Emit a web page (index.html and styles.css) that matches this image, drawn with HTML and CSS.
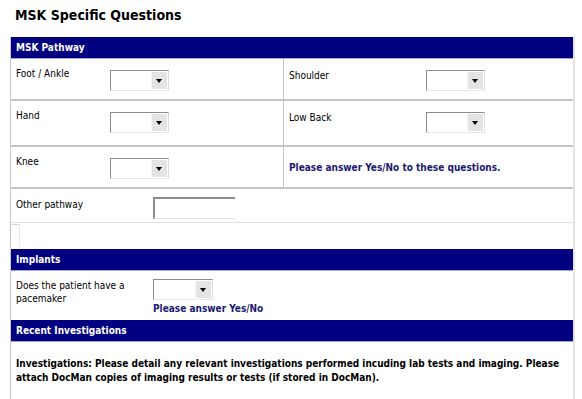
FILE: index.html
```html
<!DOCTYPE html>
<html lang="en">
<head>
    <meta charset="UTF-8">
    <title>MSK Specific Questions</title>
    <link rel="stylesheet" href="styles.css">
</head>
<body>
    <h1 class="page-title">MSK Specific Questions</h1>
    <div class="form">
        <div class="section-head">MSK Pathway</div>
        <div class="pair-row">
            <div class="cell">
                <span class="label">Foot / Ankle</span>
                <span class="select"><span class="arrow"></span></span>
            </div>
            <div class="cell right">
                <span class="label">Shoulder</span>
                <span class="select"><span class="arrow"></span></span>
            </div>
        </div>
        <div class="pair-row tall">
            <div class="cell">
                <span class="label">Hand</span>
                <span class="select"><span class="arrow"></span></span>
            </div>
            <div class="cell right">
                <span class="label">Low Back</span>
                <span class="select"><span class="arrow"></span></span>
            </div>
        </div>
        <div class="pair-row">
            <div class="cell">
                <span class="label">Knee</span>
                <span class="select"><span class="arrow"></span></span>
            </div>
            <div class="cell right note-cell">
                <span class="note">Please answer Yes/No to these questions.</span>
            </div>
        </div>
        <div class="full-row">
            <span class="label">Other pathway</span>
            <span class="textbox"></span>
        </div>
        <div class="spacer-row"><span class="stub"></span></div>

        <div class="section-head">Implants</div>
        <div class="full-row implant-row">
            <span class="label">Does the patient have a pacemaker</span>
            <div class="answer">
                <span class="select"><span class="arrow"></span></span>
                <span class="note">Please answer Yes/No</span>
            </div>
        </div>

        <div class="section-head">Recent Investigations</div>
        <div class="text-row">
            <p class="info">Investigations: Please detail any relevant investigations performed incuding lab tests and imaging. Please attach DocMan copies of imaging results or tests (if stored in DocMan).</p>
        </div>
    </div>
</body>
</html>
```

FILE: styles.css
```css
body {
    margin: 0;
    background: #fff;
    font-family: "DejaVu Sans Condensed", "DejaVu Sans", sans-serif;
    font-size: 10px;
    color: #000;
}

.page-title {
    margin: 0;
    padding: 7px 0 0 15px;
    height: 37px;
    box-sizing: border-box;
    font-size: 14px;
    line-height: 16px;
    font-weight: bold;
}

.form {
    margin-left: 10px;
    width: 562px;
    border-right: 2px solid #e4e4e4;
    border-left: 1px solid #c8c8c8;
}

.section-head {
    height: 21px;
    line-height: 21px;
    padding-left: 5px;
    background: #000080;
    color: #fff;
    font-weight: bold;
    border-bottom: 1px solid #a8a8d8;
}

.pair-row {
    display: grid;
    grid-template-columns: 272px 1fr;
    border-bottom: 2px solid #c4c4c4;
}

.cell {
    display: grid;
    grid-template-columns: 94px auto;
    align-items: start;
    height: 40px;
    padding: 8px 0 0 5px;
    box-sizing: border-box;
}

.tall .cell {
    height: 44px;
}

.cell.right {
    border-left: 1px solid #c4c4c4;
    grid-template-columns: 137px auto;
}

.label {
    line-height: 13px;
}

.right .label {
    padding-top: 2px;
}

.select {
    position: relative;
    display: block;
    width: 57px;
    height: 19px;
    margin-top: 3px;
    border-top: 1px solid #8c8c8c;
    border-left: 1px solid #8c8c8c;
    border-right: 1px solid #dcdcdc;
    border-bottom: 1px solid #e8e8e8;
    background: #fff;
}

.arrow {
    position: absolute;
    right: 1px;
    top: 1px;
    width: 15px;
    height: 17px;
    background: #e4e4e4;
    border-left: 1px solid #f4f4f4;
}

.arrow::after {
    content: "";
    position: absolute;
    left: 4px;
    top: 7px;
    border-left: 3px solid transparent;
    border-right: 3px solid transparent;
    border-top: 4px solid #000;
}

.note-cell {
    display: block;
    padding-top: 15px;
}

.note {
    color: #1a1a70;
    font-weight: bold;
}

.full-row {
    display: grid;
    grid-template-columns: 137px auto;
    height: 34px;
    padding: 9px 0 0 5px;
    box-sizing: border-box;
    border-bottom: 1px solid #e0e0e0;
}

.textbox {
    display: block;
    width: 80px;
    height: 19px;
    margin-top: -1px;
    border-top: 2px solid #8c8c8c;
    border-left: 2px solid #8c8c8c;
    border-bottom: 1px solid #e4e4e4;
}

.spacer-row {
    height: 24px;
    border-bottom: 1px solid #fff;
}

.stub {
    display: block;
    width: 8px;
    height: 22px;
    margin-top: 1px;
    border-top: 1px solid #d8d8d8;
    border-right: 1px solid #e8e8e8;
    border-left: 1px solid #c0c0c0;
    margin-left: -1px;
}

.implant-row {
    height: 49px;
    padding-top: 8px;
    border-bottom: 1px solid #fff;
}

.implant-row .label {
    width: 110px;
}

.answer .select {
    margin-top: 0;
    width: 58px;
}

.answer .note {
    display: block;
    margin-top: 3px;
}

.text-row {
    height: 60px;
    padding: 15px 0 0 5px;
}

.info {
    margin: 0;
    font-weight: bold;
    line-height: 14px;
}
```
